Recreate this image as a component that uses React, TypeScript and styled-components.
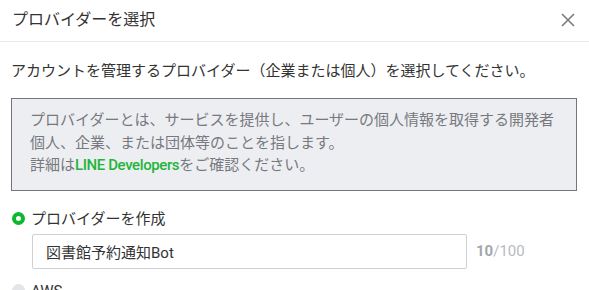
import React from "react";
import styled, { createGlobalStyle } from "styled-components";

const Global = createGlobalStyle`
  html, body { margin: 0; padding: 0; background: #fff; }
  body { font-family: "Roboto", "Noto Sans CJK JP", sans-serif; color: #333; }
  * { box-sizing: border-box; }
`;

const Dialog = styled.div`
  width: 589px;
  height: 290px;
  overflow: hidden;
  background: #fff;
`;

const Header = styled.div`
  height: 42px;
  display: flex;
  align-items: center;
  justify-content: space-between;
  padding: 0 14px 1px 12px;
  border-bottom: 1px solid #e8e9eb;
`;

const Title = styled.h1`
  margin: 0;
  font-size: 16px;
  font-weight: 400;
  color: #333;
  line-height: 22px;
`;

const CloseButton = styled.button`
  border: 0;
  background: none;
  padding: 0;
  width: 14px;
  height: 14px;
  display: flex;
  cursor: pointer;
`;

const Body = styled.div`
  padding: 18px 12px 0 11px;
  display: flex;
  flex-direction: column;
`;

const Desc = styled.p`
  margin: 0;
  font-size: 15px;
  line-height: 22px;
  color: #333;
`;

const InfoBox = styled.div`
  margin-top: 16px;
  background: #edeef2;
  border: 1px solid #73767f;
  padding: 10px 18px 13px 18px;
  font-size: 15px;
  line-height: 22.5px;
  color: #77797e;
`;

const Line = styled.div``;

const Link = styled.a`
  color: #1fb53a;
  font-weight: 500;
  text-decoration: none;
  letter-spacing: -0.4px;
`;

const RadioRow = styled.label<{ $mt: number }>`
  display: flex;
  align-items: center;
  gap: 6px;
  margin-top: ${(p) => p.$mt}px;
  font-size: 15px;
  line-height: 22px;
  color: #333;
`;

const Radio = styled.span<{ $checked?: boolean }>`
  width: 13px;
  height: 13px;
  margin-left: 1px;
  border-radius: 50%;
  flex: none;
  background: ${(p) => (p.$checked ? "#fff" : "#e4e5e8")};
  border: ${(p) => (p.$checked ? "4px solid #0cb82c" : "none")};
`;

const InputRow = styled.div`
  display: flex;
  align-items: center;
  gap: 9px;
  margin-top: 4px;
  padding-left: 21px;
`;

const TextInput = styled.div`
  width: 435px;
  height: 35px;
  border: 1px solid #cdd0d5;
  border-radius: 2px;
  display: flex;
  align-items: center;
  padding-left: 13px;
  font-size: 15px;
  color: #333;
`;

const Counter = styled.span`
  font-size: 15px;
  color: #b7bac0;
`;

const CountNow = styled.b`
  font-weight: 700;
  color: #a3a7ae;
`;

export default function App() {
  return (
    <Dialog>
      <Global />
      <Header>
        <Title>プロバイダーを選択</Title>
        <CloseButton aria-label="close">
          <svg width="14" height="14" viewBox="0 0 14 14">
            <path d="M1 1 L13 13 M13 1 L1 13" stroke="#7a7a7a" strokeWidth="1.6" fill="none" />
          </svg>
        </CloseButton>
      </Header>
      <Body>
        <Desc>アカウントを管理するプロバイダー（企業または個人）を選択してください。</Desc>
        <InfoBox>
          <Line>プロバイダーとは、サービスを提供し、ユーザーの個人情報を取得する開発者個人、企業、または団体等のことを指します。</Line>
          <Line>
            詳細は<Link href="#">LINE Developers</Link>をご確認ください。
          </Line>
        </InfoBox>
        <RadioRow $mt={17}>
          <Radio $checked />
          プロバイダーを作成
        </RadioRow>
        <InputRow>
          <TextInput>図書館予約通知Bot</TextInput>
          <Counter>
            <CountNow>10</CountNow>/100
          </Counter>
        </InputRow>
        <RadioRow $mt={11}>
          <Radio />
          AWS
        </RadioRow>
      </Body>
    </Dialog>
  );
}
